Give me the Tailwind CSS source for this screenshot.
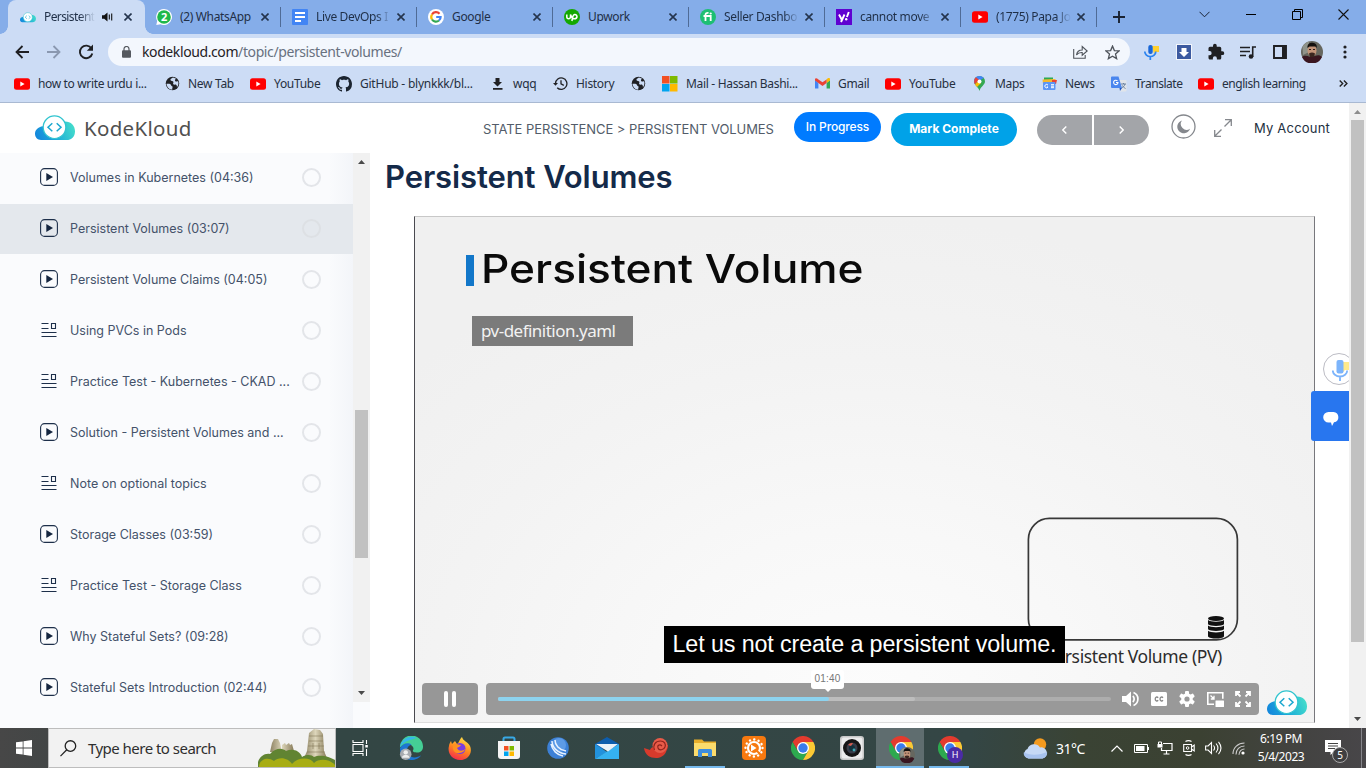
<!DOCTYPE html>
<html lang="en">
<head>
<meta charset="utf-8">
<title>Persistent Volumes</title>
<script src="https://cdn.jsdelivr.net/npm/@tailwindcss/browser@4"></script>
</head>
<body class="w-[1366px] h-[768px] overflow-hidden flex flex-col bg-white font-['Inter',sans-serif]">
<svg class="absolute size-0">
  <defs>
    <linearGradient id="cl" x1="0" x2="1" y1=".6" y2=".4"><stop offset="0" stop-color="#1488dc"/><stop offset=".5" stop-color="#1fb0d8"/><stop offset="1" stop-color="#44dccb"/></linearGradient>
    <linearGradient id="ff" x1=".7" x2=".3" y1="0" y2="1"><stop offset="0" stop-color="#ffe14a"/><stop offset=".5" stop-color="#ff8a1e"/><stop offset="1" stop-color="#f5284e"/></linearGradient>
    <linearGradient id="stone" x1="0" x2="1" y1="0" y2="0"><stop offset="0" stop-color="#8d8262"/><stop offset=".5" stop-color="#ddd6bb"/><stop offset="1" stop-color="#877a58"/></linearGradient>
  </defs>
  <symbol id="cloud" viewBox="0 0 40 26">
    <path d="M6 25C2.500 25 0 22.500 0 18.800S2.800 12 8 11.300L30 6.500C36 6.500 40 10.500 40 16.200S36.500 25 31.500 25z" fill="url(#cl)"/>
    <circle cx="19.500" cy="12.200" r="11.300" fill="#fff" stroke="#2fc4cf" stroke-width="1.200"/>
    <path d="M17.300 8.200l-4.300 4 4.300 4M21.700 8.200l4.300 4-4.300 4" fill="none" stroke="#1aa7cf" stroke-width="1.500"/>
  </symbol>
  <symbol id="yt" viewBox="0 0 16 12"><rect width="16" height="11.500" y=".25" rx="2.500" fill="#f00"/><path d="M6.300 3.500v5L10.600 6z" fill="#fff"/></symbol>
  <symbol id="x" viewBox="0 0 8 8"><path d="M.5.5l7 7M7.500.5l-7 7" stroke="#24344d" stroke-width="1.600" fill="none"/></symbol>
  <symbol id="globe" viewBox="0 0 16 16"><circle cx="8" cy="8" r="7.200" fill="#202124"/><path d="M1.600 8.300c2.800-.3 4.400 0 4.900 1.500s1.800.6 1.600 2-.6 1.600-.3 2.800C4.500 14.500 1.800 12 1.600 8.300zM8.500 1.600c-1.800 1.300-3 1.400-2.600 2.800.8 1.200 2.400.2 3 1.700s-1 1.400.1 2.600 2-.2 3.100.9.400 2 .6 2.500C14.500 9.600 14.700 7.500 13.900 5.300 12 6.500 10.700 5.700 10.600 4.500S12 3.500 11.500 2.700z" fill="#ccdcf5"/></symbol>
  <symbol id="play" viewBox="0 0 18 18"><rect x=".6" y=".6" width="16.800" height="16.800" rx="4" fill="none" stroke="#1d2f4a" stroke-width="1.100"/><path d="M6.300 5v8L13 9z" fill="#14253f"/></symbol>
  <symbol id="doc" viewBox="0 0 16 16"><path d="M.5 1.500h7M.5 6.500h7M.5 10.500h15M.5 14.500h15M10.500 1.500h4v5h-4z" fill="none" stroke="#1d2f4a" stroke-width="1.100"/></symbol>
  <symbol id="chrome" viewBox="0 0 24 24"><path d="M1.600 6A12 12 0 0 1 22.400 6H12L6.800 15z" fill="#e33b2e"/><path d="M1.600 6A12 12 0 0 0 12 24L17.200 15H6.800z" fill="#2da94f"/><path d="M22.400 6A12 12 0 0 1 12 24L17.200 15 12 6z" fill="#fcc934"/><circle cx="12" cy="12" r="6" fill="#fff"/><circle cx="12" cy="12" r="4.700" fill="#3a7cec"/></symbol>
  <symbol id="face" viewBox="0 0 22 22"><circle cx="11" cy="11" r="11" fill="#66675f"/><path d="M1 16A11 11 0 0 0 21 16C19 13.500 16 14 14 15L9 16C6 14.500 3 14 1 16z" fill="#3a1620"/><path d="M1.500 6A11 11 0 0 1 8 .5V11L2 14z" fill="#8f938a"/><ellipse cx="11" cy="9.500" rx="4.500" ry="6" fill="#c29378"/><path d="M6.500 7C6 3 9 1.800 11 1.800s5.500 1 4.700 5.200L14.500 5.500h-6z" fill="#14110f"/><path d="M8 12.500c2-1.200 4-1.200 6 0l-1 3.500H9z" fill="#3a251f"/><path d="M8 8.500h2M12 8.500h2" stroke="#2b1a16"/></symbol>
</svg>

<!-- Tab strip -->
<div class="h-[34px] shrink-0 bg-[#85ade9] flex pl-2 font-['Noto_Sans',sans-serif] text-[12px] tracking-[-0.35px] text-[#1f2f47]">
  <div class="w-[137px] h-full bg-[#ccdcf5] rounded-t-lg flex items-center pl-3 pr-3 relative">
    <div class="absolute -left-2 bottom-0 size-2 bg-[radial-gradient(circle_at_0_0,#85ade9_7.5px,#ccdcf5_8px)]"></div>
    <div class="absolute -right-2 bottom-0 size-2 bg-[radial-gradient(circle_at_100%_0,#85ade9_7.5px,#ccdcf5_8px)]"></div>
    <svg class="w-4 h-[11px] shrink-0"><use href="#cloud"/></svg>
    <span class="ml-2 w-[51px] whitespace-nowrap tracking-[-0.600px] mask-r-from-70%">Persistent</span>
    <svg class="ml-[7px] w-[11px] h-[10px]" viewBox="0 0 11 10"><path d="M0 3.200h2.200L5.500.5v9L2.200 6.800H0z" fill="#111"/><path d="M7.300 2.500v5M9.700 1.500v7" stroke="#111" stroke-width="1.100"/></svg>
    <svg class="ml-[11px] size-2 shrink-0"><use href="#x"/></svg>
  </div>
  <div class="w-[136px] flex items-center pl-[11px]">
    <svg class="size-4 shrink-0" viewBox="0 0 16 16"><path d="M8 0a8 8 0 1 1-3.500 15.200L.3 16l.9-4A8 8 0 0 1 8 0z" fill="#fff"/><circle cx="8" cy="8" r="6.800" fill="#1fb84a"/><text x="8" y="12" font-size="11" font-weight="700" text-anchor="middle" fill="#fff">2</text></svg>
    <span class="ml-2 w-[75px] whitespace-nowrap">(2) WhatsApp</span>
    <svg class="ml-[6px] size-2"><use href="#x"/></svg>
    <i class="ml-[11px] w-px h-5 bg-[#4f6b96]"></i>
  </div>
  <div class="w-[136px] flex items-center pl-[11px]">
    <svg class="size-4 shrink-0" viewBox="0 0 16 16"><rect width="16" height="16" rx="1" fill="#4285f4"/><path d="M3 4h10M3 8h10M3 12h6" stroke="#fff" stroke-width="1.800"/></svg>
    <span class="ml-2 w-[75px] whitespace-nowrap mask-r-from-80%">Live DevOps I</span>
    <svg class="ml-[6px] size-2"><use href="#x"/></svg>
    <i class="ml-[11px] w-px h-5 bg-[#4f6b96]"></i>
  </div>
  <div class="w-[136px] flex items-center pl-[11px]">
    <svg class="size-4 shrink-0" viewBox="0 0 16 16"><circle cx="8" cy="8" r="8" fill="#fff"/><g fill="none" stroke-width="2.200"><path d="M11.500 4.700A4.700 4.700 0 0 0 4 5.500" stroke="#ea4335"/><path d="M4 5.500a4.700 4.700 0 0 0 0 5" stroke="#fbbc05"/><path d="M4 10.500a4.700 4.700 0 0 0 7 1" stroke="#34a853"/><path d="M11 11.500A4.500 4.500 0 0 0 12.600 8H8.200" stroke="#4285f4"/></g></svg>
    <span class="ml-2 w-[75px]">Google</span>
    <svg class="ml-[6px] size-2"><use href="#x"/></svg>
    <i class="ml-[11px] w-px h-5 bg-[#4f6b96]"></i>
  </div>
  <div class="w-[136px] flex items-center pl-[11px]">
    <svg class="size-4 shrink-0" viewBox="0 0 16 16"><circle cx="8" cy="8" r="8" fill="#14a800"/><path d="M2.800 5.500v2.300c0 2.600 3.700 2.600 3.700 0V5.500c.8 2.600 2 4.200 4 4.200 3.300 0 3.200-4.200.4-4.200-2.400 0-2.200 2.500-3 6.500" stroke="#fff" stroke-width="1.500" fill="none"/></svg>
    <span class="ml-2 w-[75px]">Upwork</span>
    <svg class="ml-[6px] size-2"><use href="#x"/></svg>
    <i class="ml-[11px] w-px h-5 bg-[#4f6b96]"></i>
  </div>
  <div class="w-[136px] flex items-center pl-[11px]">
    <svg class="size-4 shrink-0" viewBox="0 0 16 16"><circle cx="8" cy="8" r="8" fill="#1dbf73"/><path d="M3.500 7h7.200v5M5.500 12V6c0-1.800 1-2.300 3-2.100" stroke="#fff" stroke-width="1.800" fill="none"/><circle cx="10.700" cy="4.500" r="1.100" fill="#fff"/></svg>
    <span class="ml-2 w-[75px] whitespace-nowrap mask-r-from-80%">Seller Dashbo</span>
    <svg class="ml-[6px] size-2"><use href="#x"/></svg>
    <i class="ml-[11px] w-px h-5 bg-[#4f6b96]"></i>
  </div>
  <div class="w-[136px] flex items-center pl-[11px]">
    <svg class="size-4 shrink-0" viewBox="0 0 16 16"><rect width="16" height="16" fill="#5f01d1"/><path d="M3 5.500l2.700 5M8.500 5.500L5 13M12.800 3l-1.900 5" stroke="#fff" stroke-width="1.900" fill="none"/><circle cx="10.200" cy="10.200" r="1.200" fill="#fff"/></svg>
    <span class="ml-2 w-[75px] whitespace-nowrap mask-r-from-80%">cannot move</span>
    <svg class="ml-[6px] size-2"><use href="#x"/></svg>
    <i class="ml-[11px] w-px h-5 bg-[#4f6b96]"></i>
  </div>
  <div class="w-[136px] flex items-center pl-[11px]">
    <svg class="w-4 h-3 shrink-0"><use href="#yt"/></svg>
    <span class="ml-2 w-[75px] whitespace-nowrap mask-r-from-80%">(1775) Papa Jo</span>
    <svg class="ml-[6px] size-2"><use href="#x"/></svg>
    <i class="ml-[11px] w-px h-5 bg-[#4f6b96]"></i>
  </div>
  <svg class="ml-[16px] mt-[11px] size-3" viewBox="0 0 12 12"><path d="M6 0v12M0 6h12" stroke="#1a2333" stroke-width="1.900"/></svg>
  <svg class="ml-[74px] mt-[11px] w-[11px] h-[7px]" viewBox="0 0 11 7"><path d="M.5.8l5 5 5-5" stroke="#1a2333" fill="none"/></svg>
  <div class="ml-[36px] mt-[14px] w-[10px] h-px bg-black"></div>
  <svg class="ml-[36px] mt-[9px] size-[11px]" viewBox="0 0 11 11"><path d="M.5 2.500h8v8h-8zM2.500 2.500v-2h8v8h-2" stroke="#000" fill="none"/></svg>
  <svg class="ml-[35px] mt-[9px] size-[11px]" viewBox="0 0 11 11"><path d="M.5.5l10 10M10.500.5l-10 10" stroke="#111" stroke-width="1.100"/></svg>
</div>

<!-- Toolbar -->
<div class="h-9 shrink-0 bg-[#ccdcf5] flex items-center">
  <svg class="ml-[15px] size-[14px]" viewBox="0 0 14 14"><path d="M14 7H1.500M7.500 1l-6 6 6 6" stroke="#1f2023" stroke-width="1.800" fill="none"/></svg>
  <svg class="ml-[18px] size-[14px]" viewBox="0 0 14 14"><path d="M0 7h12.500M6.500 1l6 6-6 6" stroke="#8a98b0" stroke-width="1.800" fill="none"/></svg>
  <svg class="ml-[17px] size-[16px]" viewBox="0 0 16 16"><path d="M13.500 4.500A6.300 6.300 0 1 0 14.300 9.500" stroke="#1f2023" stroke-width="1.900" fill="none"/><path d="M15 0.500v6.300H8.800z" fill="#1f2023"/></svg>
  <div class="ml-[14px] w-[1022px] h-7 rounded-full bg-[#f3f7fd] flex items-center">
    <svg class="ml-[14px] w-[9px] h-3" viewBox="0 0 9 12"><rect y="4.300" width="9" height="7.500" rx="1" fill="#55595f"/><path d="M2 5V3a2.500 2.500 0 0 1 5 0v2" stroke="#55595f" stroke-width="1.200" fill="none"/></svg>
    <span class="ml-[11px] w-[933px] font-['Noto_Sans',sans-serif] text-[14px] tracking-[-0.400px] leading-[20px] text-[#1f2125]">kodekloud.com<span class="text-[#687180]">/topic/persistent-volumes/</span></span>
    <svg class="w-[15px] h-[14px] ml-[-2px]" viewBox="0 0 15 14"><path d="M.7 4v9.200h11.500V10M3.500 10c.5-3.500 2.500-5 5.700-5V1.500l5 4.500-5 4.200V7.500C7 7.300 5 8 3.500 10z" stroke="#4f545b" stroke-width="1.100" fill="none"/></svg>
    <svg class="ml-[17px] size-[15px]" viewBox="0 0 16 16"><path d="M8 1.200l2 4.700 5 .4-3.800 3.300 1.200 5L8 12l-4.400 2.600 1.200-5L1 6.300l5-.4z" stroke="#4f545b" stroke-width="1.400" fill="none"/></svg>
  </div>
  <svg class="ml-[14px] size-[15px]" viewBox="0 0 15 15"><path d="M8 1h7v6h-4l-1 2z" fill="#ffd02e"/><rect x="4.300" y="0" width="4.400" height="9" rx="2" fill="#1766d8"/><path d="M.8 6.500a5.500 5 0 0 0 11 0M6.300 11.500V15" stroke="#2a83f0" stroke-width="1.700" fill="none"/></svg>
  <svg class="ml-[17px] size-4" viewBox="0 0 16 16"><rect width="16" height="16" fill="#f3f6fb"/><rect x="1" y="1" width="14" height="14" fill="#3c5aa0"/><path d="M5.500 4h5v4H13l-5 5-5-5h2.500z" fill="#fff"/></svg>
  <svg class="ml-[15px] size-[18px]" viewBox="0 0 24 24"><path d="M20.500 11H19V7a2 2 0 0 0-2-2h-4V3.500a2.500 2.500 0 0 0-5 0V5H4a2 2 0 0 0-2 2v3.800h1.500a2.700 2.700 0 0 1 0 5.400H2V20c0 1.100.9 2 2 2h3.800v-1.500a2.700 2.700 0 0 1 5.400 0V22H17a2 2 0 0 0 2-2v-4h1.500a2.500 2.500 0 0 0 0-5z" fill="#1f2023"/></svg>
  <svg class="ml-[15px] w-4 h-[13px]" viewBox="0 0 16 13"><path d="M0 1.500h10M0 5.500h10M0 9.500h6" stroke="#1f2023" stroke-width="1.700"/><path d="M12.700 11V1H16" stroke="#1f2023" stroke-width="1.600" fill="none"/><circle cx="11" cy="10.500" r="2.300" fill="#1f2023"/></svg>
  <svg class="ml-[17px] size-[14px]" viewBox="0 0 14 14"><path d="M1 1h12v12H1z" fill="none" stroke="#1f2023" stroke-width="1.900"/><path d="M9 1h4v12H9z" fill="#1f2023"/></svg>
  <svg class="ml-[14px] size-[22px]"><use href="#face"/></svg>
  <svg class="ml-[20px] w-[4px] h-[14px]" viewBox="0 0 4 14"><g fill="#1f2023"><circle cx="2" cy="2" r="1.600"/><circle cx="2" cy="7" r="1.600"/><circle cx="2" cy="12" r="1.600"/></g></svg>
</div>

<!-- Bookmarks -->
<div class="h-[33px] shrink-0 bg-[#ccdcf5] border-b border-[#a9b9d2] flex items-center pb-[5px] pl-[14px] font-['Noto_Sans',sans-serif] text-[12px] tracking-[-0.3px] text-[#26303f] whitespace-nowrap">
  <div class="w-[151px] flex items-center gap-2"><svg class="w-4 h-3"><use href="#yt"/></svg><span class="tracking-[-0.350px]">how to write urdu i...</span></div>
  <div class="w-[85px] flex items-center gap-2"><svg class="size-[15px]"><use href="#globe"/></svg>New Tab</div>
  <div class="w-[86px] flex items-center gap-2"><svg class="w-4 h-3"><use href="#yt"/></svg>YouTube</div>
  <div class="w-[154px] flex items-center gap-2"><svg class="size-4" viewBox="0 0 16 16"><path fill="#1b2430" d="M8 0C3.580 0 0 3.580 0 8c0 3.540 2.290 6.530 5.470 7.590.4.070.55-.17.55-.38 0-.19-.01-.82-.01-1.490-2.010.37-2.530-.49-2.690-.94-.09-.23-.48-.94-.82-1.130-.28-.15-.68-.52-.01-.53.63-.01 1.080.58 1.230.82.72 1.210 1.870.87 2.330.66.07-.52.28-.87.51-1.070-1.780-.2-3.640-.89-3.640-3.950 0-.87.31-1.590.82-2.150-.08-.2-.36-1.020.08-2.120 0 0 .67-.21 2.200.82.64-.18 1.320-.27 2-.27s1.360.09 2 .27c1.530-1.040 2.200-.82 2.200-.82.44 1.100.16 1.920.08 2.120.51.56.82 1.270.82 2.150 0 3.070-1.870 3.750-3.650 3.950.29.25.54.73.54 1.480 0 1.070-.01 1.930-.01 2.200 0 .21.15.46.55.38A8.010 8.010 0 0 0 16 8c0-4.420-3.580-8-8-8z"/></svg><span class="tracking-[-0.230px]">GitHub - blynkkk/bl...</span></div>
  <div class="w-[63px] flex items-center gap-2"><svg class="w-[15px] h-3" viewBox="0 0 15 12"><path d="M5.500 0h4v4H12L7.500 8.500 3 4h2.500zM3 10h9.500v1.700H3z" fill="#202124"/></svg>wqq</div>
  <div class="w-[78px] flex items-center gap-2"><svg class="size-[15px]" viewBox="0 0 15 15"><path d="M2.500 7.500a5.700 5.700 0 1 1 1.700 4.200M8 4.300v3.500l2.800 1.600" fill="none" stroke="#202124" stroke-width="1.300"/><path d="M0 7h5L2.500 9.800z" fill="#202124"/></svg>History</div>
  <div class="w-[31px] flex items-center"><svg class="size-[15px]"><use href="#globe"/></svg></div>
  <div class="w-[153px] flex items-center gap-2"><svg class="size-4" viewBox="0 0 16 16"><path fill="#f25022" d="M0 0h7.500v7.500H0z"/><path fill="#7fba00" d="M8 0h7.500v7.500H8z"/><path fill="#00a4ef" d="M0 8h7.500v7.500H0z"/><path fill="#ffb900" d="M8 8h7.500v7.500H8z"/></svg><span class="tracking-[-0.320px]">Mail - Hassan Bashi...</span></div>
  <div class="w-[70px] flex items-center gap-2"><svg class="w-[15px] h-[11px]" viewBox="0 0 15 11"><path d="M0 2v8.500h3.400V5z" fill="#4285f4"/><path d="M15 2v8.500h-3.400V5z" fill="#34a853"/><path d="M11.600 1.500V5L15 2.500V1.200c0-1.500-1.900-1.600-3.400.3z" fill="#fbbc04"/><path d="M0 1.200V2.500L3.400 5l4.100 3 4.100-3V1.500L7.500 4.300 3.400 1.500C1.900 0 0 0 0 1.200z" fill="#ea4335"/></svg>Gmail</div>
  <div class="w-[87px] flex items-center gap-2"><svg class="w-4 h-3"><use href="#yt"/></svg>YouTube</div>
  <div class="w-[70px] flex items-center gap-2"><svg class="size-[15px]" viewBox="0 0 15 15"><path d="M7.500 0A5.500 5.500 0 0 1 13 5.500c0 3.500-4.500 5-5.500 9.500C6.500 11 2 9 2 5.500A5.500 5.500 0 0 1 7.500 0z" fill="#34a853"/><path d="M2.500 7.500L11.800 2C9 -1 4 -.5 2.500 3A5 5 0 0 0 2.500 7.500z" fill="#4285f4"/><path d="M2.500 3.500A5.500 5.500 0 0 1 4 1.300l3 2.500L3 8.200C2 7 2 5 2.500 3.500z" fill="#ea4335"/><path d="M3 8.500L7 4l2 3-4 4z" fill="#fbbc04"/><circle cx="7.500" cy="5.500" r="2" fill="#fff"/></svg>Maps</div>
  <div class="w-[69px] flex items-center gap-2"><svg class="size-[15px]" viewBox="0 0 15 15"><path d="M2 1.500h9v4H2z" fill="#2da94f"/><path d="M.5 3.500l13-.5v5H1z" fill="#f5b82e"/><path d="M10 4h5l-1 4h-4z" fill="#ea4335"/><rect x="1" y="6" width="12.500" height="8" rx="1" fill="#5b95f5"/><path d="M6 9.200A1.700 1.700 0 1 0 6 11H4.800M9 8.700h3M9 10.200h3M9 11.700h3" stroke="#fff" fill="none"/></svg>News</div>
  <div class="w-[87px] flex items-center gap-2"><svg class="size-4" viewBox="0 0 16 16"><path d="M6 4h8.500a1 1 0 0 1 1 1v9.500a1 1 0 0 1-1 1H9z" fill="#e1e5ea"/><path d="M1 .5h6.500L11 12H1a1 1 0 0 1-1-1V1.500a1 1 0 0 1 1-1z" fill="#4a86ee"/><path d="M6.500 5A2.200 2.200 0 1 0 7 6.500H5" stroke="#fff" fill="none" stroke-width="1.100"/><path d="M10 8h5M12.500 7v1M14 8c-.5 2-2 3.500-3.500 4M11.500 9.500c.5 1.500 1.500 2 3 3" stroke="#69809f" fill="none"/><path d="M8.500 12H11l-2 3z" fill="#1d56c4"/></svg><span class="tracking-[-0.450px]">Translate</span></div>
  <div class="w-[140px] flex items-center gap-2"><svg class="w-4 h-3"><use href="#yt"/></svg><span class="tracking-[-0.450px]">english learning</span></div>
  <svg class="ml-px w-[9px] h-[7px]" viewBox="0 0 9 7"><path d="M.7.5l3 3-3 3M4.900.5l3 3-3 3" stroke="#222" stroke-width="1.400" fill="none"/></svg>
</div>

<!-- Page -->
<div class="flex h-[625px] shrink-0 relative">
  <div class="w-[1349px] flex flex-col">
    <header class="h-[50px] flex items-start bg-white">
      <svg class="ml-[35px] mt-[12px] w-10 h-[26px]"><use href="#cloud"/></svg>
      <span class="ml-[9px] mt-[11px] w-[399px] font-['Noto_Sans',sans-serif] text-[20.500px] leading-[28px] tracking-[0.300px] text-[#505050]">KodeKloud</span>
      <span class="mt-[16px] w-[311px] text-[13px] leading-[20px] tracking-[-0.065px] text-[#525c69] whitespace-nowrap">STATE PERSISTENCE &gt; PERSISTENT VOLUMES</span>
      <span class="mt-[9px] w-[87px] h-[30px] rounded-full bg-[#007bff] text-white text-[12px] font-medium leading-[30px] tracking-[-0.130px] text-center">In Progress</span>
      <span class="ml-[10px] mt-[10px] w-[126px] h-[33px] rounded-full bg-[#00a2e8] text-white text-[12px] font-bold leading-[32px] text-center">Mark Complete</span>
      <div class="ml-5 mt-3 flex gap-[2px]">
        <span class="w-[55px] h-[30px] rounded-l-full bg-[#a3a5a9] flex items-center justify-center"><svg class="w-[5px] h-[8px]" viewBox="0 0 5 8"><path d="M4.300.5L.8 4l3.500 3.500" stroke="#fff" stroke-width="1.400" fill="none"/></svg></span>
        <span class="w-[55px] h-[30px] rounded-r-full bg-[#a3a5a9] flex items-center justify-center"><svg class="w-[5px] h-[8px]" viewBox="0 0 5 8"><path d="M.7.5L4.200 4 .7 7.500" stroke="#fff" stroke-width="1.400" fill="none"/></svg></span>
      </div>
      <svg class="ml-[22px] mt-[11px] size-[25px]" viewBox="0 0 25 25"><circle cx="12.500" cy="12.500" r="11.500" fill="none" stroke="#85888d" stroke-width="1.300"/><path d="M11 6.500a6.500 6.500 0 1 0 8 8.200A5.800 5.800 0 0 1 11 6.500z" fill="#85888d"/></svg>
      <svg class="ml-[18px] mt-[16px] w-[18px] h-[18px]" viewBox="0 0 18 18"><path d="M11 .7h6.300V7M17.300.7L10.500 7.500M.7 11v6.300H7M.7 17.300L7.500 10.500" stroke="#85888d" stroke-width="1.300" fill="none"/></svg>
      <span class="ml-[22px] mt-[15px] text-[13px] leading-[20px] tracking-[0.200px] text-[#23303f] whitespace-nowrap">My Account</span>
    </header>
    <div class="flex h-[575px]">
      <aside class="w-[370px] bg-[#fafbfd] flex">
        <nav class="w-[353px] flex flex-col gap-px text-[12.500px] text-[#44526a] whitespace-nowrap bg-[linear-gradient(90deg,transparent_93%,#f3f5f9)]">
          <div class="h-[50px] flex items-center pl-10"><svg class="size-[18px] mb-[2px]"><use href="#play"/></svg><span class="ml-3 w-[232px]">Volumes in Kubernetes (04:36)</span><i class="size-[19px] mb-[2px] rounded-full border-2 border-[#e3e5e9]"></i></div>
          <div class="h-[50px] flex items-center pl-10 bg-[#e4e8ed]"><svg class="size-[18px] mb-[2px]"><use href="#play"/></svg><span class="ml-3 w-[232px]">Persistent Volumes (03:07)</span><i class="size-[19px] mb-[2px] rounded-full border-2 border-[#dde0e4]"></i></div>
          <div class="h-[50px] flex items-center pl-10"><svg class="size-[18px] mb-[2px]"><use href="#play"/></svg><span class="ml-3 w-[232px]">Persistent Volume Claims (04:05)</span><i class="size-[19px] mb-[2px] rounded-full border-2 border-[#e3e5e9]"></i></div>
          <div class="h-[50px] flex items-center pl-[41px]"><svg class="size-4 mb-[2px]"><use href="#doc"/></svg><span class="ml-[13px] w-[232px]">Using PVCs in Pods</span><i class="size-[19px] mb-[2px] rounded-full border-2 border-[#e3e5e9]"></i></div>
          <div class="h-[50px] flex items-center pl-[41px]"><svg class="size-4 mb-[2px]"><use href="#doc"/></svg><span class="ml-[13px] w-[232px]">Practice Test - Kubernetes - CKAD ...</span><i class="size-[19px] mb-[2px] rounded-full border-2 border-[#e3e5e9]"></i></div>
          <div class="h-[50px] flex items-center pl-10"><svg class="size-[18px] mb-[2px]"><use href="#play"/></svg><span class="ml-3 w-[232px]">Solution - Persistent Volumes and ...</span><i class="size-[19px] mb-[2px] rounded-full border-2 border-[#e3e5e9]"></i></div>
          <div class="h-[50px] flex items-center pl-[41px]"><svg class="size-4 mb-[2px]"><use href="#doc"/></svg><span class="ml-[13px] w-[232px]">Note on optional topics</span><i class="size-[19px] mb-[2px] rounded-full border-2 border-[#e3e5e9]"></i></div>
          <div class="h-[50px] flex items-center pl-10"><svg class="size-[18px] mb-[2px]"><use href="#play"/></svg><span class="ml-3 w-[232px]">Storage Classes (03:59)</span><i class="size-[19px] mb-[2px] rounded-full border-2 border-[#e3e5e9]"></i></div>
          <div class="h-[50px] flex items-center pl-[41px]"><svg class="size-4 mb-[2px]"><use href="#doc"/></svg><span class="ml-[13px] w-[232px]">Practice Test - Storage Class</span><i class="size-[19px] mb-[2px] rounded-full border-2 border-[#e3e5e9]"></i></div>
          <div class="h-[50px] flex items-center pl-10"><svg class="size-[18px] mb-[2px]"><use href="#play"/></svg><span class="ml-3 w-[232px]">Why Stateful Sets? (09:28)</span><i class="size-[19px] mb-[2px] rounded-full border-2 border-[#e3e5e9]"></i></div>
          <div class="h-[50px] flex items-center pl-10"><svg class="size-[18px] mb-[2px]"><use href="#play"/></svg><span class="ml-3 w-[232px]">Stateful Sets Introduction (02:44)</span><i class="size-[19px] mb-[2px] rounded-full border-2 border-[#e3e5e9]"></i></div>
        </nav>
        <div class="w-[17px] h-[549px] bg-[#f1f1f1] flex flex-col items-center">
          <svg class="mt-[7px] w-[7px] h-1" viewBox="0 0 7 4"><path d="M0 4L3.500 0 7 4z" fill="#4a4a4a"/></svg>
          <div class="mt-[246px] w-[13px] h-[148px] bg-[#c1c1c1]"></div>
          <svg class="mt-[133px] w-[7px] h-1" viewBox="0 0 7 4"><path d="M0 0h7L3.500 4z" fill="#4a4a4a"/></svg>
        </div>
      </aside>
      <main class="flex-1">
        <h1 class="ml-[15px] mt-1 h-[59px] text-[31px] leading-[39px] font-semibold tracking-[-0.1px] text-[#142a49] whitespace-nowrap">Persistent Volumes</h1>
        <!-- Video: slide contents and player overlays -->
        <div class="ml-[44px] w-[901px] h-[507px] relative border-l border-r border-l-[#4a4a50] border-r-[#77777c] border-t border-t-[#c8c8c8] border-b border-b-[#ddd] bg-[radial-gradient(ellipse_620px_480px_at_50%_95%,#fcfcfc_0%,#f8f8f8_35%,#f3f3f3_70%,#f0f0f0_100%)]">
          <div class="absolute left-[51px] top-[38px] w-2 h-[31px] bg-[#1277c9]"></div>
          <div class="absolute left-[66px] top-[27px] text-[40px] leading-[50px] font-medium origin-left scale-x-[1.105] text-[#0a0a0a] whitespace-nowrap">Persistent Volume</div>
          <div class="absolute left-[57px] top-[99px] w-[161px] h-[30px] bg-[#7b7b7b] text-[#f2f2f2] font-['Noto_Sans',sans-serif] text-[17px] leading-[29px] tracking-[-0.520px] pl-[9px] whitespace-nowrap">pv-definition.yaml</div>
          <div class="absolute left-[612px] top-[300px] w-[212px] h-[124px]"><svg class="w-[212px] h-[124px]" viewBox="0 0 212 124"><rect x="1.400" y="1.400" width="209" height="121.500" rx="21" fill="none" stroke="#383838" stroke-width="1.700"/></svg></div>
          <svg class="absolute left-[793px] top-[399px] w-4 h-[23px]" viewBox="0 0 16 23"><ellipse cx="8" cy="2.500" rx="8" ry="2.500" fill="#111"/><g fill="#111"><path d="M0 4c2 2.300 14 2.300 16 0v4.200c-2 2.300-14 2.300-16 0zM0 9.500c2 2.300 14 2.300 16 0v3.800c-2 2.300-14 2.300-16 0zM0 14.700c2 2.300 14 2.300 16 0v5.800c-2 2.800-14 2.800-16 0z"/></g></svg>
          <div class="absolute right-[92px] top-[427px] text-[17.500px] leading-[24px] tracking-[-0.380px] text-[#2c2c2c] font-['Noto_Sans',sans-serif] whitespace-nowrap">Persistent Volume (PV)</div>
          <div class="absolute left-[249px] top-[409px] w-[401px] h-[37px] bg-black text-white font-['Liberation_Sans',sans-serif] text-[23.300px] leading-[36px] text-center tracking-[-0.120px] whitespace-nowrap">Let us not create a persistent volume.</div>
          <div class="absolute left-[7px] top-[466px] flex items-start gap-2">
            <div class="w-14 h-8 rounded bg-[#979797] flex items-center justify-center gap-1"><i class="w-1 h-4 rounded-sm bg-white"></i><i class="w-1 h-4 rounded-sm bg-white"></i></div>
            <div class="w-[773px] h-8 rounded bg-[#999] flex items-center pl-3">
              <div class="w-[613px] h-1 rounded-sm bg-[#adadad] relative"><div class="absolute h-1 rounded-sm bg-[#bdbdbd]" style="width:417px"></div><div class="absolute h-1 rounded-sm bg-[#8dd3ef]" style="width:331px"></div></div>
              <svg class="ml-[11px] w-[18px] h-4" viewBox="0 0 18 16"><path d="M0 5h4l5-4.500v15L4 11H0z" fill="#fff"/><path d="M10.800 5a4 4 0 0 1 0 6M11.500 1.500a7 7 0 0 1 0 13" stroke="#fff" stroke-width="1.700" fill="none"/></svg>
              <svg class="ml-[11px] w-4 h-[14px]" viewBox="0 0 16 14"><rect width="16" height="14" rx="1.500" fill="#fff"/><path d="M7.200 5.700c-1.200-1.300-3-.6-3 1.300s1.800 2.600 3 1.300M12 5.700c-1.200-1.300-3-.6-3 1.300s1.800 2.600 3 1.300" stroke="#888" stroke-width="1.300" fill="none"/></svg>
              <svg class="ml-[12px] size-4" viewBox="0 0 16 16"><g fill="#fff"><circle cx="8" cy="8" r="5.800"/><rect x="6" y="0" width="4" height="16" rx="1"/><rect x="6" y="0" width="4" height="16" rx="1" transform="rotate(60 8 8)"/><rect x="6" y="0" width="4" height="16" rx="1" transform="rotate(120 8 8)"/></g><circle cx="8" cy="8" r="2.600" fill="#999"/></svg>
              <svg class="ml-[12px] w-[17px] h-[15px]" viewBox="0 0 17 15"><path d="M7 12.200H.8V.8h15v6" stroke="#fff" stroke-width="1.600" fill="none"/><rect x="8.500" y="8.500" width="8.500" height="6.500" rx=".5" fill="#fff"/><path d="M3.500 3.500l3 3M7 3.800V7H3.800" stroke="#fff" stroke-width="1.300" fill="none"/></svg>
              <svg class="ml-[11px] w-4 h-4" viewBox="0 0 16 16"><path d="M1 5V1h4M1 1l4.500 4.500M11 1h4v4M15 1l-4.500 4.500M1 11v4h4M1 15l4.500-4.500M11 15h4v-4M15 15l-4.500-4.500" stroke="#fff" stroke-width="1.800" fill="none"/></svg>
            </div>
            <svg class="mt-[7px] w-10 h-[26px]"><use href="#cloud"/></svg>
          </div>
          <div class="absolute left-[396px] top-[453px] w-[33px] h-[19px] rounded-[3px] bg-white text-[#777] text-center font-['Liberation_Sans',sans-serif] text-[10px] leading-[18px] tracking-[0.200px]">01:40<i class="absolute left-[13px] top-[18px] border-x-4 border-t-4 border-x-transparent border-t-white"></i></div>
        </div>
      </main>
    </div>
  </div>
  <div class="w-[17px] bg-[#f1f1f1] flex flex-col items-center">
    <svg class="mt-[7px] w-[7px] h-1" viewBox="0 0 7 4"><path d="M0 4L3.500 0 7 4z" fill="#8d8d8d"/></svg>
    <div class="mt-[6px] w-[13px] h-[522px] bg-[#c1c1c1]"></div>
    <svg class="mt-[75px] w-[7px] h-1" viewBox="0 0 7 4"><path d="M0 0h7L3.500 4z" fill="#4a4a4a"/></svg>
  </div>
  <!-- Floating widgets -->
  <div class="absolute left-[1311px] top-[250px] w-[38px] overflow-hidden">
    <div class="ml-3 size-8 rounded-full border border-[#bcbcc4] bg-white"><svg class="ml-[8px] mt-[5px] w-[17px] h-[22px]" viewBox="0 0 17 22"><path d="M11 3h6v8h-4l-2 2z" fill="#ffe98a"/><rect x="4.500" y="1" width="7" height="13.500" rx="2" fill="#7cb4fb"/><path d="M.8 11.500a7.200 6 0 0 0 14.400 0M8 17.500V22" stroke="#7cb4fb" stroke-width="1.800" fill="none"/></svg></div>
    <div class="mt-[6px] w-[38px] h-[50px] rounded-l-[3px] bg-[#2876ef] flex items-center justify-center"><svg class="mt-[6px] ml-[2px] w-4 h-[14px]" viewBox="0 0 16 14"><path d="M5.500 0h5a5.300 5.200 0 0 1 .5 10.300L9 14l-1-3.600H5.500A5.300 5.200 0 0 1 5.500 0z" fill="#fff"/></svg></div>
  </div>
</div>

<!-- Taskbar -->
<div class="h-10 shrink-0 flex bg-[linear-gradient(90deg,#474747_0,#434646_48px,#334644_336px,#344645_970px,#3a4334_1080px,#3b4132_1200px,#434341_1300px,#484649_1366px)] text-white font-['Noto_Sans',sans-serif]">
  <div class="w-12 flex items-center justify-center"><svg class="size-4" viewBox="0 0 16 16"><path d="M0 2.300L6.700 1.400v6.200H0zM7.500 1.300L16 0v7.600H7.500zM0 8.400h6.700v6.200L0 13.700zM7.500 8.400H16V16l-8.500-1.200z" fill="#fff"/></svg></div>
  <div class="w-72 h-10 bg-[#f2f2f2] border border-[#bdbdbd] flex items-center overflow-hidden">
    <svg class="ml-[11px] size-[17px]" viewBox="0 0 17 17"><circle cx="10.500" cy="6" r="5.300" fill="none" stroke="#222" stroke-width="1.300"/><path d="M6.800 9.800L.5 16.200" stroke="#222" stroke-width="1.300"/></svg>
    <span class="ml-[11px] w-[171px] text-[15px] tracking-[-0.520px] text-[#2f2f2f] whitespace-nowrap">Type here to search</span>
    <svg class="shrink-0 w-[77px] h-[38px]" viewBox="0 0 77 38"><path d="M12 23l2-9 2-4h4l2 4 2 9zM24 22v-6l3-2 1 2 3-2 1 2 2-1 2 7z" fill="url(#stone)"/><path d="M46 29l3-7 2-18 5-4 6 1 3 4 1 17 3 7z" fill="url(#stone)"/><path d="M51 7h14M51 12h14M50 17h16M49 23h18M55 14v6M61 14v6" stroke="#776b4a" stroke-width=".5"/><path d="M0 33c2-6 7-9 12-8 6-7 13-6 16-3 7-3 14 0 16 6 5-3 10-2 12 0 6-3 16 0 21 3v7H0z" fill="#618432"/><path d="M1 38c0-7 8-11 15-6 5-5 15-3 18 3 6-7 18-7 22-1 5-5 16-4 21 2v3z" fill="#a8ad13"/></svg>
  </div>
  <div class="w-12 flex items-center justify-center"><svg class="w-[17px] h-4" viewBox="0 0 17 16"><path d="M1 0v2.500h10V0M1 16v-2.500h10V16M1 4.500h10v7H1zM14.500 0v4M14.500 9v7" stroke="#fff" stroke-width="1.100" fill="none"/><rect x="13.300" y="5" width="2.500" height="2.500" fill="#fff"/></svg></div>
  <div class="w-[51px] flex items-center justify-center"><svg class="ml-[3px] size-[25px]" viewBox="0 0 26 26"><path d="M1 12A12 12 0 0 1 25 11c0 5-4 7-8 6-3 0-3-2-2-3 1-5-8-9-14-2z" fill="#45ce95"/><path d="M1 12A12 12 0 0 1 18 2C12 4 3 6 1 12z" fill="#35b8e8"/><path d="M1 13c2-5 8-7 12-4-5 1-6 7-3 11 3 3 9 3 13 0-4 7-22 8-22-7z" fill="#1d76d2"/><circle cx="7" cy="19" r="6" fill="#a8abb0"/><circle cx="7" cy="17" r="2.300" fill="#eee"/><path d="M3 22.500c1-4 7-4 8 0z" fill="#eee"/></svg></div>
  <div class="w-[49px] flex items-center justify-center"><svg class="size-6" viewBox="0 0 24 24"><path d="M3 5l1 3 3-3 2 3c2-1 2-4 5-7 1 4 5 4 8 9 3 7-2 14-10 14C4 24-1 17 1 10c0-2 1-3 2-5z" fill="url(#ff)"/><circle cx="12" cy="12.500" r="5.500" fill="#7a3ce0"/><path d="M6 8c3-1 4 1 7 1-1 2-3 2-4 3 2 4 6 3 8 1-1 5-11 6-12 0-.5-2 0-4 1-5z" fill="#ff9220"/></svg></div>
  <div class="w-[49px] flex items-center justify-center"><svg class="size-6" viewBox="0 0 24 24"><path d="M6.500 6V3a1.500 1.500 0 0 1 1.500-1.500h8A1.500 1.500 0 0 1 17.500 3v3" stroke="#38a9e6" stroke-width="2" fill="none"/><path d="M1 5h22v15a3 3 0 0 1-3 3H4a3 3 0 0 1-3-3z" fill="#f5f5f5"/><path fill="#f25022" d="M7 10h4.500v4.500H7z"/><path fill="#7fba00" d="M12.500 10H17v4.500h-4.500z"/><path fill="#00a4ef" d="M7 15.500h4.500V20H7z"/><path fill="#ffb900" d="M12.500 15.500H17V20h-4.500z"/></svg></div>
  <div class="w-[49px] flex items-center justify-center"><svg class="size-[22px]" viewBox="0 0 22 22"><circle cx="11" cy="11" r="10.800" fill="#3c80d6"/><circle cx="12" cy="8" r="7" fill="#5d9be6"/><path d="M5 4c0 6 5 12 14 13M8 3c0 5 4 10 11 11M4 7c1 6 6 11 12 12" stroke="#e8f2ff" stroke-width="1.500" fill="none"/></svg></div>
  <div class="w-[49px] flex items-center justify-center"><svg class="w-6 h-[22px]" viewBox="0 0 24 22"><path d="M0 7l12-7 12 7v5H0z" fill="#0d5dad"/><path d="M0 7l12 8L0 22z" fill="#2291dc"/><path d="M24 7L0 22h24z" fill="#35b1f0"/><path d="M1 7h22l-10 7.500z" fill="#e9f1f8"/></svg></div>
  <div class="w-[49px] flex items-center justify-center"><svg class="size-6" viewBox="0 0 24 24"><path d="M0 12l6 2c1-3 4-4 7-2l11-3c0 4-2 6-2 7-2 4-6 6-10 6-6 0-11-3-12-10z" fill="#d83a2c"/><circle cx="16" cy="9.500" r="7.500" fill="#e85b49"/><path d="M10.500 14c-2-5 1-9 6-9 4 0 5.500 3 4.500 6s-6 4-7 1 2-4 4-2" stroke="#8e221b" stroke-width="1.100" fill="none"/></svg></div>
  <div class="w-[49px] flex flex-col items-center justify-end"><svg class="mb-[8px] w-[22px] h-5" viewBox="0 0 22 20"><path d="M0 1.500h8l2 2h12V18H0z" fill="#e7ad2b"/><path d="M0 5h22v13H0z" fill="#fbdb6c"/><path d="M4 19v-6.500A1.500 1.500 0 0 1 5.500 11h11a1.500 1.500 0 0 1 1.500 1.500V19h-4v-4H8v4z" fill="#3e8ddd"/></svg><i class="w-10 h-[2px] bg-[#76b9ed]"></i></div>
  <div class="w-[49px] flex items-center justify-center"><svg class="size-6" viewBox="0 0 24 24"><rect width="24" height="24" rx="4" fill="#f7790f"/><circle cx="12" cy="12" r="8.500" fill="none" stroke="#fff" stroke-width="2.400" stroke-linecap="round" stroke-dasharray=".1 4.350"/><circle cx="12" cy="12" r="6" fill="none" stroke="#fff" stroke-width="2.200"/><path d="M9 8.500l5.500 3.500L9 15.500z" fill="#fff"/><path d="M15 15l3 3" stroke="#f7790f" stroke-width="2"/></svg></div>
  <div class="w-[49px] flex items-center justify-center"><svg class="size-6"><use href="#chrome"/></svg></div>
  <div class="w-[49px] flex items-center justify-center"><svg class="size-6" viewBox="0 0 24 24"><rect width="24" height="24" rx="3" fill="#c9c9c9"/><rect x="1.500" y="1.500" width="21" height="21" rx="2.500" fill="#ececec"/><circle cx="12" cy="12" r="9" fill="#151515"/><circle cx="12" cy="12" r="5.500" fill="#383c48"/><circle cx="12" cy="12" r="3" fill="#12313c"/><path d="M8 9a5 5 0 0 1 5-2l-2 3z" fill="#d75c4e"/><circle cx="14" cy="14" r="1.400" fill="#41a7b3"/></svg></div>
  <div class="w-12 bg-[#5f6d6f] border-b-2 border-[#76b9ed] flex items-center justify-center relative"><svg class="size-6 mt-[2px] ml-px"><use href="#chrome"/></svg><svg class="absolute left-[23px] top-[19px] size-4"><use href="#face"/></svg></div>
  <div class="w-[49px] flex flex-col items-center justify-end relative"><svg class="mb-[6px] size-6 ml-[2px]"><use href="#chrome"/></svg><i class="w-10 h-[2px] bg-[#76b9ed]"></i><span class="absolute left-[23px] top-[19px] size-4 rounded-full bg-[#4b2ba6] text-[9px] leading-4 text-center">H</span></div>
  <div class="ml-[50px] flex items-center">
    <svg class="w-[25px] h-[21px]" viewBox="0 0 25 21"><circle cx="17" cy="6.500" r="6.200" fill="#f39a1f"/><path d="M5.500 20.500A5 5 0 0 1 4.500 11 7 7 0 0 1 17 9.500a5.500 5.500 0 0 1 2.500 11z" fill="#c6d9f6"/><path d="M5.500 20.500A5 5 0 0 1 1 14c5 4 17 3 23 0a5.500 5.500 0 0 1-4.500 6.500z" fill="#a8c3ef"/></svg>
    <span class="ml-[8px] w-[55px] text-[14px] tracking-[-0.5px]">31°C</span>
    <svg class="w-3 h-[7px]" viewBox="0 0 12 7"><path d="M.5 6.500L6 1l5.500 5.500" stroke="#fff" stroke-width="1.200" fill="none"/></svg>
    <svg class="ml-[11px] w-[15px] h-[9px]" viewBox="0 0 15 9"><path d="M.5.5h13v8H.5zM14.500 3v3" stroke="#fff" fill="none"/><rect x="2" y="2" width="8.500" height="5" fill="#fff"/></svg>
    <svg class="ml-[8px] w-4 h-[14px]" viewBox="0 0 16 14"><path d="M6 2.500h9v7H4.500V7M9.500 9.500v3.500M6.500 13h6" stroke="#fff" stroke-width="1.200" fill="none"/><rect x=".5" y="3" width="5" height="3.500" fill="#fff"/><path d="M1.500 3V1h3v2" stroke="#fff" fill="none"/></svg>
    <svg class="ml-[10px] w-[12px] h-4" viewBox="0 0 12 16"><path d="M2.500 1.500C4 .3 7 .3 8.500 1.500M2.500 14.500c1.500 1.200 4.500 1.200 6 0M.7 4.500h7.800v7H.7zM8.500 7l2.700-2v6L8.500 9" stroke="#fff" stroke-width="1.100" fill="none"/><circle cx="4.600" cy="8" r="1.300" fill="none" stroke="#fff"/></svg>
    <svg class="ml-[10px] w-[17px] h-[14px]" viewBox="0 0 17 14"><path d="M.6 5h2.500L6.500 1.500v11L3.100 9H.6zM8.500 4.500c1.300 1.500 1.300 3.500 0 5M11 2.500c2.300 2.700 2.300 6.300 0 9M13.500.8c3.200 4 3.200 8.400 0 12.400" stroke="#fff" stroke-width="1.100" fill="none"/></svg>
    <svg class="ml-[10px] w-[13px] h-[13px]" viewBox="0 0 13 13"><path d="M1 12C1 5.500 6 1 12.500 1M4 12.500C4 7.500 7.500 4 12.500 4M7 12.700C7 9.500 9.500 7 12.500 7" stroke="#ccc" stroke-width="1.100" fill="none"/><circle cx="11" cy="11" r="1.600" fill="#fff"/></svg>
    <div class="ml-[8px] w-[56px] text-center text-[12px] leading-[18px] tracking-[-0.450px] whitespace-nowrap"><div>6:19 PM</div><div>5/4/2023</div></div>
    <div class="ml-[16px] w-[25px] h-10 relative"><svg class="mt-[12px] w-4 h-[15px]" viewBox="0 0 16 15"><path d="M0 0h16v12H9l-3.500 3v-3H0z" fill="#fff"/><path d="M3 3.500h10M3 6h10M3 8.500h7" stroke="#444"/></svg><span class="absolute left-[7px] top-[19px] size-4 rounded-full border border-[#aaa] bg-[#3f3f41] text-[10px] leading-[14px] text-center">5</span></div>
    <i class="ml-[11px] w-px h-10 bg-[#85858a]"></i>
  </div>
</div>
</body>
</html>
